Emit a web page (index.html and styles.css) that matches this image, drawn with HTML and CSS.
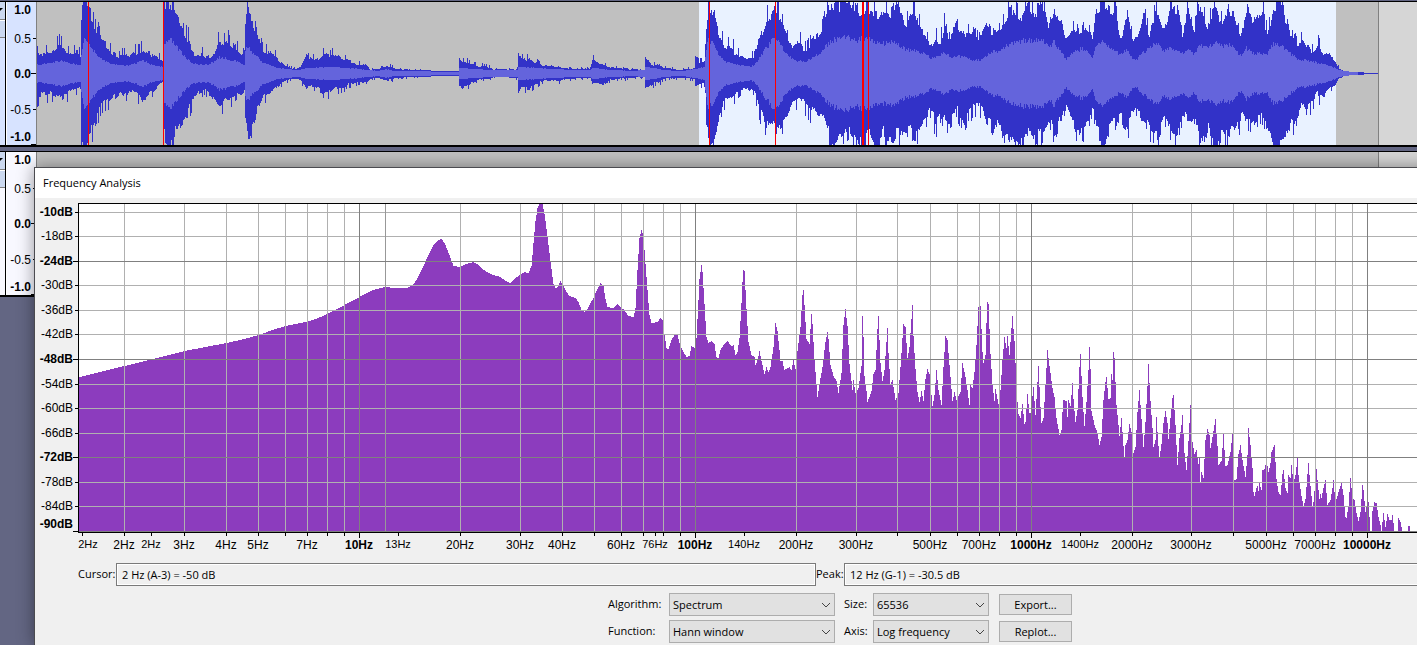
FILE: index.html
```html
<!DOCTYPE html>
<html lang="en">
<head>
<meta charset="utf-8">
<title>Frequency Analysis</title>
<link rel="stylesheet" href="styles.css">
</head>
<body>
<main class="app">
  <section class="track selected" aria-label="Track 1">
    <div class="panel"><div class="panel-head"><span class="arrow"></span></div><div class="panel-button"></div></div>
    <svg class="ruler"></svg>
    <svg class="wave" id="wave"></svg>
  </section>
  <section class="track" aria-label="Track 2">
    <div class="panel"><div class="panel-head"><span class="arrow"></span></div><div class="panel-button"></div></div>
    <svg class="ruler"></svg>
    <div class="wave empty"><div class="clip"></div></div>
  </section>

  <section class="dialog" role="dialog" aria-labelledby="title">
    <h1 class="title" id="title">Frequency Analysis</h1>
    <svg class="chart" id="chart"></svg>
    <div class="readouts">
      <div class="readout"><label for="cursor">Cursor:</label><input id="cursor" type="text" readonly value="2 Hz (A-3) = -50 dB"></div>
      <div class="readout peak"><label for="peak">Peak:</label><input id="peak" type="text" readonly value="12 Hz (G-1) = -30.5 dB"></div>
    </div>
    <div class="controls">
      <label for="algorithm">Algorithm:</label>
      <span class="select"><select id="algorithm"><option>Spectrum</option></select><svg class="chevron" viewBox="0 0 10 6"><path d="M1 1l4 4 4-4"/></svg></span>
      <label for="size">Size:</label>
      <span class="select"><select id="size"><option>65536</option></select><svg class="chevron" viewBox="0 0 10 6"><path d="M1 1l4 4 4-4"/></svg></span>
      <button type="button">Export...</button>
      <label for="function">Function:</label>
      <span class="select"><select id="function"><option>Hann window</option></select><svg class="chevron" viewBox="0 0 10 6"><path d="M1 1l4 4 4-4"/></svg></span>
      <label for="axis">Axis:</label>
      <span class="select"><select id="axis"><option>Log frequency</option></select><svg class="chevron" viewBox="0 0 10 6"><path d="M1 1l4 4 4-4"/></svg></span>
      <button type="button">Replot...</button>
    </div>
  </section>
</main>
<script src="script.js"></script>
</body>
</html>
```
FILE: styles.css
```css
* { box-sizing: border-box; }
body { margin: 0; background: #636683; color: #000; font: 11px/16px "Open Sans", "Noto Sans", sans-serif; }
.app { position: relative; min-height: 100vh; padding-top: 1px; overflow: hidden; display: flex; flex-direction: column; gap: 4px; }
.track { display: flex; border-top: 1px solid #000; border-bottom: 2px solid #000; background: #f8f8ff; }
.track.selected { background: #d7e3ff; }
.panel { width: 6px; flex: none; border-right: 1px solid #000; }
.panel-head, .panel-button { height: 18px; background: #cbd8f0; border-bottom: 1px solid #808080; }
.panel-head { padding-top: 6px; }
.panel-button { border-top: 1px solid #fff; }
.arrow { display: block; width: 3px; height: 3px; background: #000; clip-path: polygon(0 0, 100% 0, 0 100%); }
.ruler { flex: none; width: 31px; height: 143px; border-left: 1px solid #fff; border-right: 1px solid #808080; }
.wave { display: block; flex: 1; min-width: 0; height: 143px; background: #d6d6d6; }
.clip { width: 1342px; height: 100%; background: #c0c0c0; border-right: 1px solid #808080; }
svg text { font-family: "Liberation Sans", Arial, sans-serif; font-size: 12px; }
svg .bold { font-weight: bold; }
svg .small { font-size: 11px; }

.dialog { position: absolute; top: 167px; bottom: 0; left: 34px; right: -229px; background: #f0f0f0; border: 1px solid #4b4b50; border-bottom: 0; box-shadow: 0 0 16px rgba(0, 0, 0, .4); }
.title { margin: 0; height: 30px; padding: 0 8px; background: #fff; font-size: 11px; line-height: 30px; font-weight: normal; }
.chart { display: block; width: 100%; height: 365px; }
.readouts { display: flex; padding: 0 91px 0 43px; }
.readout { flex: 1; display: grid; grid-template-columns: 38px 1fr; align-items: center; }
.readout.peak { grid-template-columns: 28px 1fr; }
.readout label { padding-bottom: 1px; }
.readout input { min-width: 0; width: 100%; height: 23px; padding: 0 5px 1px; border: 1px solid #7a7a7a; outline: 1px solid #fff; outline-offset: -2px; background: #f0f0f0; font: inherit; color: inherit; }
.controls { display: grid; grid-template-columns: 61px 166px 38px 116px 83px; row-gap: 4px; justify-content: center; align-items: center; padding-top: 7px; }
.controls label { white-space: nowrap; padding-bottom: 1px; }
.controls label:nth-of-type(even) { margin-left: 9px; }
.select { position: relative; display: block; }
select { display: block; appearance: none; width: 100%; height: 23px; padding: 0 3px; border: 1px solid #adadad; border-radius: 0; background: #e1e1e1; font: inherit; color: inherit; }
.chevron { position: absolute; right: 4px; top: 9px; width: 10px; height: 6px; fill: none; stroke: #444; pointer-events: none; }
button { margin: 0 0 0 10px; height: 21px; padding: 0; border: 1px solid #adadad; background: #e1e1e1; font: inherit; color: inherit; }
```
FILE: script.js
```js
const NS = 'http://www.w3.org/2000/svg';

function add(svg, name, attrs, text) {
  const el = document.createElementNS(NS, name);
  for (const k in attrs) el.setAttribute(k, attrs[k]);
  if (text) el.textContent = text;
  svg.appendChild(el);
}
const rect = (svg, x, y, width, height, fill) => add(svg, 'rect', { x, y, width, height, fill });

// Linear interpolation over rows of [x, value, value, ...].
function sample(rows, x) {
  let i = 0;
  while (i < rows.length - 2 && rows[i + 1][0] <= x) i++;
  const a = rows[i], b = rows[i + 1];
  const t = Math.min(1, Math.max(0, (x - a[0]) / (b[0] - a[0])));
  return a.map((v, k) => v + (b[k] - v) * t);
}
const parse = s => s.trim().split(/\s+/).map(r => r.split(',').map(Number));

// Vertical amplitude rulers
for (const svg of document.querySelectorAll('.ruler')) {
  [['1.0', 12, 1, 0], ['0.5', 41, 0, 36], ['0.0', 76, 1, 71], ['-0.5', 112, 0, 107], ['-1.0', 139, 1, 142]].forEach(([t, y, b, tick]) => {
    add(svg, 'text', { x: 24, y, 'text-anchor': 'end', class: b ? 'bold' : '' }, t);
    if (tick) rect(svg, b ? 24 : 26, tick, 5, 1, '#000');
  });
}

// Waveform rows: x, peak above centre, peak below centre, RMS
const envelope = parse(`
37,20,22,8 50,18,18,10 60,28,26,13 68,20,20,10 78,22,15,8 80,18,14,8 81,50,58,20 83,70,70,33 87,66,68,32 92,60,55,25
97,42,34,18 104,30,26,12 112,20,24,9 120,16,20,8 128,18,18,8 136,20,20,10 142,25,30,13 150,20,20,9 158,15,12,7 163,14,9,6
164,68,62,30 170,69,68,34 178,55,58,24 186,34,42,15 194,20,22,9 205,16,16,8 213,20,24,11 219,30,34,16 228,30,26,14
236,26,24,12 244,17,18,8 245,48,45,22 247,70,62,27 251,58,60,22 257,40,36,16 262,24,24,11 270,20,20,8 278,13,12,5
285,7,6,4 295,4,5,3 300,6,6,3 306,17,14,5 314,12,12,5 322,17,18,6 323,26,24,6 324,18,20,6 335,17,15,6 345,13,12,5 360,8,8,4 366,8,9,3
370,4,5,3 378,4,4,2 386,7,7,4 395,4,4,2 420,3,3,2 440,2,2,1 458,2,2,1 459,16,13,5 463,11,13,5 470,9,9,4 478,7,6,4
487,6,5,3 492,4,3,3 517,4,4,3 518,18,18,6 522,13,14,6 528,15,16,6 534,9,11,5 537,13,10,5 542,7,7,5 550,7,7,4 560,6,7,4
568,4,5,3 590,4,4,3 592,13,10,5 597,11,10,5 602,8,11,4 610,6,6,3 618,5,5,3 630,4,4,2 644,3,3,3 645,15,14,6 648,13,14,6
653,8,10,5 658,9,9,4 663,5,5,3 680,3,4,2 694,5,5,4 695,11,13,4 699,10,11,5 704,11,10,6 705,20,20,15 706,35,45,25
708,67,70,34 710,60,66,30 714,64,60,30 718,38,45,18 724,25,28,12 731,24,26,10 738,18,18,8 746,15,16,7 753,17,15,7
757,28,25,12 762,40,40,20 768,60,58,28 774,71,57,36 779,62,58,30 786,42,42,20 792,28,28,14 798,28,25,12 806,25,28,12
813,32,36,16 820,42,45,20 827,68,55,28 834,62,70,34 843,71,60,36 850,71,55,35 856,62,60,32 862,60,70,35 868,71,58,36
876,60,71,30 883,64,58,30 890,60,67,32 898,71,55,28 905,50,54,24 914,64,63,22 923,44,50,20 930,32,40,15 937,35,50,17
940,30,45,18 944,48,40,22 950,34,50,15 957,50,38,17 965,40,50,16 972,44,32,13 980,38,32,13 986,50,48,18 993,42,58,22 1000,45,50,22
1006,57,66,28 1013,70,64,30 1020,58,71,32 1028,70,62,33 1035,60,62,32 1043,70,66,33 1049,50,48,25 1053,71,64,32 1060,55,45,22
1066,36,33,14 1072,46,50,20 1080,44,58,24 1086,52,54,24 1092,34,34,15 1096,66,58,28 1102,71,71,31 1110,66,50,25 1115,68,50,24
1120,37,44,18 1127,63,54,24 1132,36,40,15 1137,35,34,14 1142,52,45,20 1145,62,45,22 1149,40,60,26 1156,68,63,30 1163,50,46,22 1170,68,54,24
1176,64,60,22 1182,40,42,20 1188,66,44,24 1193,40,42,20 1200,71,68,28 1208,52,52,26 1215,71,71,31 1222,55,66,27 1229,66,62,29
1236,50,55,22 1241,36,42,17 1246,66,50,25 1252,48,50,20 1260,62,46,20 1267,45,50,19 1273,66,70,30 1282,71,69,28 1287,50,52,22
1292,38,50,18 1298,32,37,14 1301,38,28,13 1305,32,38,13 1312,22,24,12 1317,28,20,10 1323,18,22,9 1330,19,12,7 1335,11,10,5 1339,4,4,3 1344,2,2,2
1352,1,1,1 1362,1,1,0 1364,0,0,0 1378,0,0,0`);

const wave = document.getElementById('wave');
wave.setAttribute('shape-rendering', 'crispEdges');
rect(wave, 0, 0, 1341, 143, '#c0c0c0');
rect(wave, 662, 0, 637, 143, '#e9f2ff');
rect(wave, 1341, 0, 1, 143, '#808080');
let seed = 41;
const random = () => (seed = (seed * 16807) % 2147483647) / 2147483647;
let outer = '', inner = '';
// Each side keeps one slow drift, held for a few columns, under its per-column spikes.
const drift = [{ left: 0, value: 1 }, { left: 0, value: 1 }];
function rough(v, side) {
  const d = drift[side];
  if (d.left-- <= 0) { d.left = 1 + Math.floor(random() * 3); d.value = 0.86 + 0.26 * random(); }
  const r = random();
  if (v < 3) return Math.round(v);
  const spike = r > 0.85 ? (v < 35 ? 0.36 : 0.16) : 0;
  return Math.min(71, Math.round(v * (d.value + 0.1 * (r - 0.5) + spike)));
}
for (let x = 37; x < 1378; x++) {
  const [, up, down, rms] = sample(envelope, x);
  const u = rough(up, 0), d = rough(down, 1);
  const m = Math.min(Math.round(rms * (0.9 + 0.18 * random())), u, d);
  outer += `M${x - 37} ${71 - u}h1v${u + d + 1}h-1z`;
  if (m > 0) inner += `M${x - 37} ${71 - m}h1v${2 * m + 1}h-1z`;
}
add(wave, 'path', { d: outer, fill: '#3232c8' });
add(wave, 'path', { d: inner, fill: '#6464dc' });
[[88, 1], [163, 1], [709, 1], [775, 1], [862, 2], [868, 1]].forEach(([x, w]) => rect(wave, x - 37, 0, w, 143, '#f00'));

// Spectrum outline rows: x, y
const spectrum = parse(`
79,377 124,366 184,351 226,343 244,339 258,335 275,329 285,326 300,323 312,320 320,317 333,311 344,305 359,297 372,290 384,287
389,287 390,288 406,288 412,285 416,280 421,270 427,257 433,245 438,240 441,239 444,243 449,255 453,266 460,267 465,264
473,262 477,264 482,269 490,274 500,277 505,281 510,283 515,278 521,274 524,272 528,273 531,266 533,243 535,221 537,208
539,204 542,204 544,214 547,236 550,262 553,284 555,288 557,287 560,281 562,284 566,292 569,296 575,298 578,302 581,310
584,312 587,309 590,303 593,298 596,291 600,283 603,286 605,299 607,307 613,308 617,304 620,307 624,310 628,316 633,317
635,308 637,270 639,238 641,230 643,236 645,264 647,290 649,315 651,323 657,322 660,318 662,320 664,334 666,348 668,349
671,340 674,335 677,335 679,343 682,350 686,357 689,356 691,346 694,348 696,338 698,300 699,279 701,265 702,272 704,304
706,337 708,343 711,341 714,344 716,357 718,358 720,350 723,345 727,341 731,346 733,345 735,355 737,352 739,338 741,303
742,282 743,270 744,271 746,309 748,342 751,355 754,357 755,365 757,360 759,351 761,361 764,374 766,367 768,372 770,367
773,347 775,323 777,331 779,350 780,361 782,361 784,370 789,367 791,370 793,360 795,369 797,351 800,327 802,295 803,290
804,305 806,339 809,344 811,314 812,324 814,360 817,397 819,384 822,367 825,342 827,332 828,339 830,365 833,376 836,381
838,393 841,373 843,325 845,309 847,326 849,364 852,390 853,380 855,393 858,388 861,366 862,316 863,337 864,376 866,391
867,402 871,391 873,374 875,370 877,329 878,316 880,363 882,381 884,370 887,328 888,353 890,384 892,380 895,400 898,393
900,367 903,324 905,327 907,358 909,347 911,319 912,305 913,336 915,369 917,392 919,402 921,391 923,401 925,379 927,369
929,374 932,406 934,395 936,370 938,390 941,405 943,367 945,336 947,340 949,365 952,401 954,392 956,400 960,392 962,363
965,377 967,390 969,405 970,385 972,388 974,372 976,345 978,307 979,319 980,306 982,352 983,363 985,355 986,323 987,302
988,304 990,354 992,384 994,401 995,389 998,404 1000,390 1002,360 1004,337 1006,348 1007,336 1009,355 1011,328 1012,316
1014,341 1015,363 1017,402 1018,414 1020,418 1022,404 1024,424 1025,422 1027,394 1029,413 1030,413 1033,387 1035,415
1038,366 1040,407 1041,423 1043,418 1045,385 1047,350 1049,366 1052,388 1054,397 1056,418 1059,435 1061,430 1062,412
1063,400 1066,401 1067,417 1068,400 1070,406 1072,383 1073,399 1075,422 1077,410 1079,367 1080,354 1082,397 1084,426
1086,402 1088,370 1089,347 1090,369 1091,411 1094,425 1097,433 1099,445 1101,437 1103,400 1105,382 1106,377 1108,399
1110,398 1111,374 1112,380 1113,352 1114,358 1116,405 1118,425 1119,436 1121,418 1123,446 1124,457 1125,445 1127,440
1129,424 1131,432 1133,453 1135,447 1137,412 1139,390 1141,419 1143,447 1145,422 1147,386 1148,364 1150,401 1152,428
1153,447 1155,440 1156,417 1158,446 1159,457 1161,444 1163,423 1165,411 1167,423 1168,439 1170,418 1172,398 1173,395
1175,425 1177,465 1179,438 1181,425 1182,415 1184,453 1186,470 1188,441 1190,405 1192,442 1194,454 1196,450 1198,464
1199,458 1200,482 1201,472 1203,478 1205,440 1207,429 1209,435 1210,448 1212,437 1215,419 1217,446 1218,465 1221,461
1223,434 1225,466 1227,465 1230,452 1232,434 1234,480 1236,479 1238,454 1240,445 1242,460 1245,477 1247,455 1248,428
1250,445 1252,468 1253,492 1254,496 1256,488 1257,486 1258,491 1259,483 1261,490 1262,470 1264,469 1266,460 1268,472
1270,463 1271,452 1274,445 1276,479 1278,492 1280,495 1282,474 1283,470 1285,488 1287,493 1288,475 1290,478 1291,465
1293,482 1295,475 1297,458 1298,475 1301,496 1303,506 1305,499 1307,474 1308,463 1310,486 1312,506 1313,502 1316,469
1317,480 1319,499 1320,494 1321,498 1323,488 1325,480 1327,505 1330,500 1332,488 1333,480 1335,503 1338,492 1341,483
1343,495 1345,517 1346,518 1348,506 1350,478 1352,498 1354,500 1356,513 1358,521 1360,512 1362,485 1363,490 1365,512
1366,507 1368,502 1370,531 1371,531 1372,511 1374,502 1376,503 1378,517 1380,525 1381,531 1383,513 1385,527 1387,514
1389,520 1391,520 1392,515 1394,531 1397,531 1398,518 1400,522 1402,531 1407,531 1408,526 1409,526 1410,531 1460,531`);

const chart = document.getElementById('chart');
const plot = document.createElementNS(NS, 'g');
plot.setAttribute('transform', 'translate(-35 -198)');
chart.appendChild(plot);
rect(plot, 78, 203, 1560, 330, '#000');
rect(plot, 79, 204, 1558, 328, '#fff');
let bars = '';
for (let x = 79; x < 1450; x++) {
  const y = Math.round(sample(spectrum, x)[1]);
  bars += `M${x} ${y}h1V532h-1z`;
}
add(plot, 'path', { d: bars, fill: '#8c3cbe', 'shape-rendering': 'crispEdges' });

const LIGHT = '#b0b0b0', DARK = '#808080';
const levels = [[212, '-10dB', 1], [236, '-18dB'], [261, '-24dB', 1], [285, '-30dB'], [310, '-36dB'], [334, '-42dB'], [359, '-48dB', 1],
  [384, '-54dB'], [408, '-60dB'], [433, '-66dB'], [457, '-72dB', 1], [482, '-78dB'], [506, '-84dB'], [531, '-90dB', 1]];
const minor = [124, 184, 226, 258, 285, 307, 327, 344, 460, 520, 562, 594, 621, 643, 663, 680, 796, 856, 897, 930, 957, 979, 999, 1016,
  1132, 1191, 1233, 1266, 1293, 1315, 1335, 1352];
const major = [359, 695, 1031, 1367];
levels.forEach(([y, t, b]) => {
  const strong = b && y > 212;
  if (!strong) rect(plot, 79, y, 1558, 1, LIGHT);
  rect(plot, strong ? 73 : 75, y, strong ? 5 : 3, 1, '#000');
  add(plot, 'text', { x: 73, y: y === 531 ? 528 : y + 4, 'text-anchor': 'end', class: b ? 'bold' : '' }, t);
});
minor.forEach(x => { rect(plot, x, 204, 1, 328, LIGHT); rect(plot, x, 533, 1, 3, '#000'); });
rect(plot, 385, 204, 1, 328, '#989898');
levels.forEach(([y, , b]) => { if (b && y > 212) rect(plot, 79, y, 1558, 1, DARK); });
major.forEach(x => { rect(plot, x, 204, 1, 328, DARK); rect(plot, x, 533, 1, 5, '#000'); });
[82, 151, 398, 655, 744, 1080].forEach(x => rect(plot, x, 533, 1, 3, '#000'));
[[88, '2Hz', 'small'], [124, '2Hz'], [151, '2Hz', 'small'], [184, '3Hz'], [226, '4Hz'], [258, '5Hz'], [307, '7Hz'], [359, '10Hz', 'bold'],
  [398, '13Hz', 'small'], [460, '20Hz'], [520, '30Hz'], [562, '40Hz'], [621, '60Hz'], [655, '76Hz', 'small'], [695, '100Hz', 'bold'],
  [744, '140Hz', 'small'], [796, '200Hz'], [856, '300Hz'], [930, '500Hz'], [979, '700Hz'], [1031, '1000Hz', 'bold'], [1080, '1400Hz', 'small'],
  [1132, '2000Hz'], [1191, '3000Hz'], [1266, '5000Hz'], [1315, '7000Hz'], [1367, '10000Hz', 'bold']
].forEach(([x, t, c]) => add(plot, 'text', { x, y: c === 'small' ? 548 : 549, 'text-anchor': 'middle', class: c || '' }, t));
```
